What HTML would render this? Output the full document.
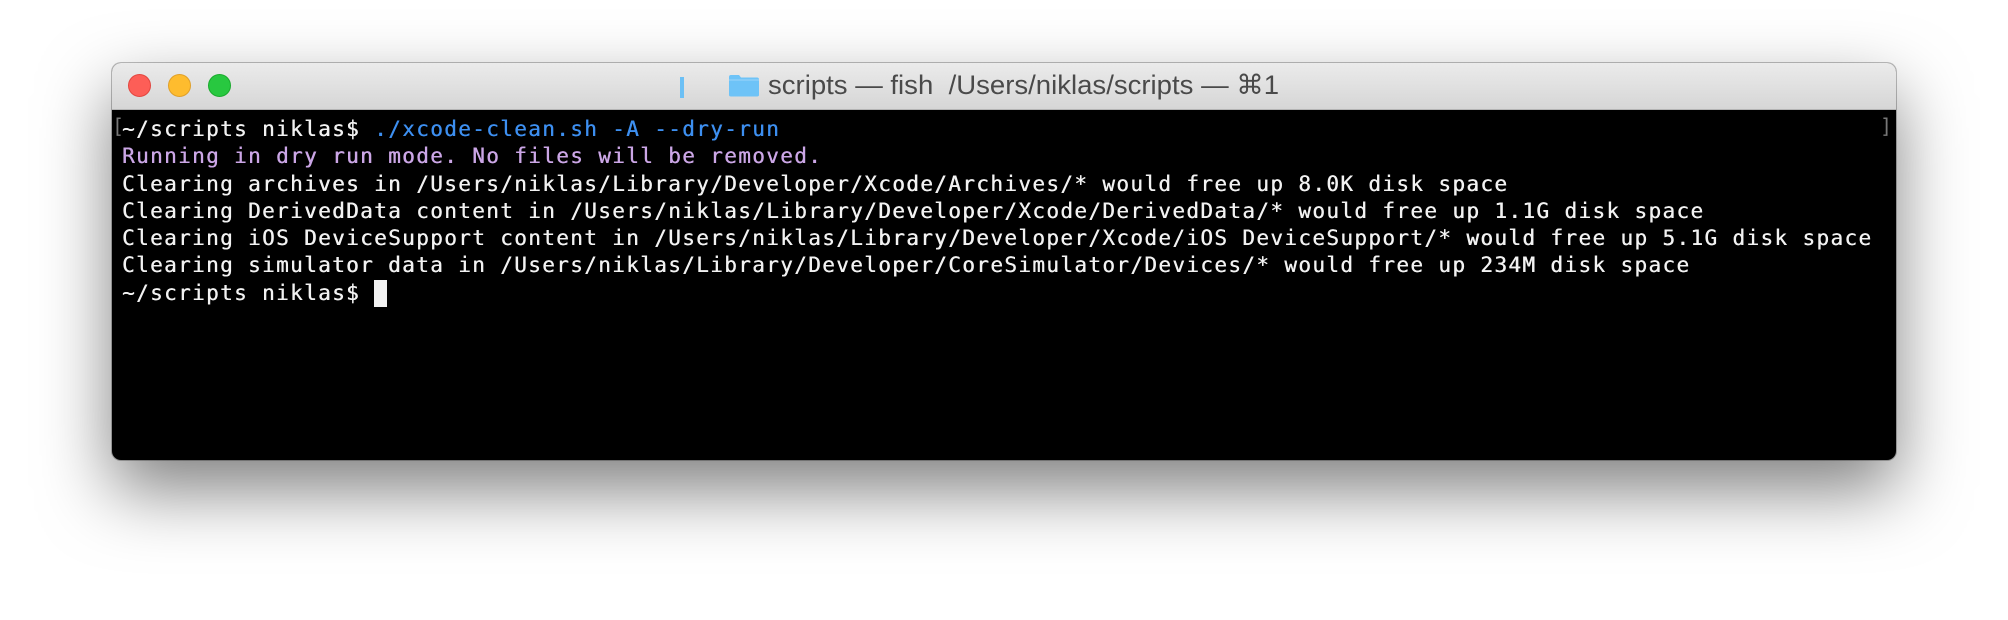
<!DOCTYPE html>
<html><head><meta charset="utf-8"><style>
html,body{margin:0;padding:0;background:#fff;width:2008px;height:620px;overflow:hidden}
.win{position:absolute;left:112px;top:63px;width:1784px;height:397px;border-radius:9px;background:#000;
box-shadow:0 30px 70px rgba(0,0,0,0.5),0 0 0 1px rgba(0,0,0,0.25);overflow:hidden}
.tb{position:absolute;left:0;top:0;width:100%;height:46px;background:linear-gradient(#ebebeb,#d6d6d6);border-bottom:1px solid #b4b4b4}
.dot{position:absolute;top:11px;width:23px;height:23px;border-radius:50%;box-sizing:border-box}
.title{position:absolute;left:656px;top:7px;font-family:"Liberation Sans",sans-serif;font-size:27px;color:#4a4a4a;white-space:nowrap;transform:scaleX(1.02);transform-origin:left}
.term{position:absolute;left:10px;top:53px;font-family:"DejaVu Sans Mono",monospace;font-size:21px;letter-spacing:1.36px;line-height:27.3px;color:#f2f2f2;white-space:pre;text-shadow:0.4px 0 0 currentColor}
.b{color:#3d8ff0}.p{color:#cba6e6}
.cur{display:inline-block;width:13px;height:27px;background:#f2f2f2;vertical-align:top}
</style></head><body>
<div class="win">
 <div class="tb">
  <div class="dot" style="left:16px;background:#fd5e57;border:1px solid #e2463f"></div>
  <div class="dot" style="left:56px;background:#febc2e;border:1px solid #e0a028"></div>
  <div class="dot" style="left:96px;background:#28c840;border:1px solid #1aab2d"></div>
  <div style="position:absolute;left:568px;top:14px;width:4px;height:21px;background:#6cc0f5"></div>
  <svg style="position:absolute;left:616px;top:11px" width="32" height="23" viewBox="0 0 32 23"><path d="M1 3 Q1 1 3 1 H11 L13 3.5 H29 Q31 3.5 31 5.5 V21 Q31 22.5 29 22.5 H3 Q1 22.5 1 21 Z" fill="#6ec3f7"/><path d="M1 6 H31" stroke="#9fd6fa" stroke-width="1"/></svg>
  <div class="title">scripts — fish&nbsp; /Users/niklas/scripts — ⌘1</div>
 </div>
 <div style="position:absolute;left:0;top:50px;color:#777;font-family:'DejaVu Sans Mono',monospace;font-size:20px;line-height:27px">[</div>
 <div style="position:absolute;right:4px;top:50px;color:#777;font-family:'DejaVu Sans Mono',monospace;font-size:20px;line-height:27px">]</div>
 <div class="term">~/scripts niklas$ <span class="b">./xcode-clean.sh -A --dry-run</span>
<span class="p">Running in dry run mode. No files will be removed.</span>
Clearing archives in /Users/niklas/Library/Developer/Xcode/Archives/* would free up 8.0K disk space
Clearing DerivedData content in /Users/niklas/Library/Developer/Xcode/DerivedData/* would free up 1.1G disk space
Clearing iOS DeviceSupport content in /Users/niklas/Library/Developer/Xcode/iOS DeviceSupport/* would free up 5.1G disk space
Clearing simulator data in /Users/niklas/Library/Developer/CoreSimulator/Devices/* would free up 234M disk space
~/scripts niklas$ <span class="cur"></span></div>
</div>
</body></html>
